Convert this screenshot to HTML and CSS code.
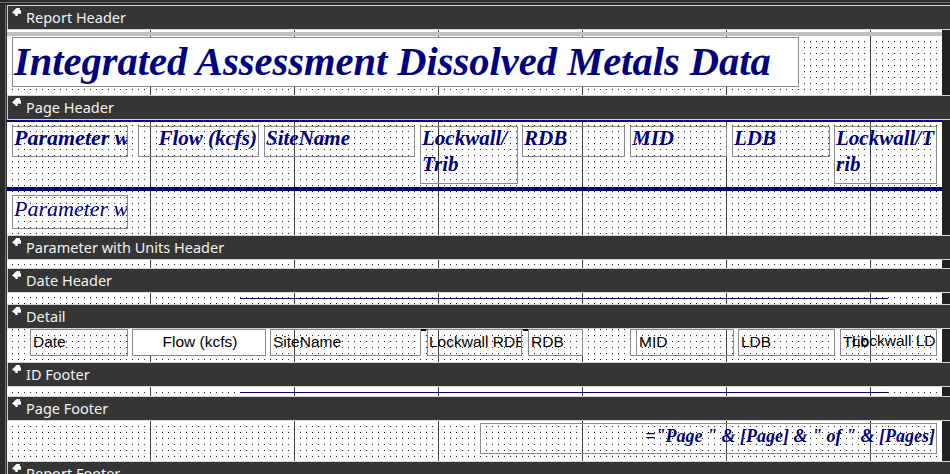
FILE: index.html
```html
<!doctype html>
<html>
  <head>
    <title>rptDissolvedMetals : Report</title>
    <link rel="stylesheet" href="styles.css">
  </head>
  <body>
    <div class="frame">
      <div class="sheet">

        <div class="band"><svg class="grip" viewBox="0 0 8 8"><path d="M0 4 L4 0 H7 V2 H8 V5 H5 V7 H3 V6 Z"/></svg><span>Report Header</span></div>
        <div class="sec sec-rh">
          <div class="rh-rule"></div>
          <div class="ctl title">Integrated Assessment Dissolved Metals Data</div>
        </div>

        <div class="band"><svg class="grip" viewBox="0 0 8 8"><path d="M0 4 L4 0 H7 V2 H8 V5 H5 V7 H3 V6 Z"/></svg><span>Page Header</span></div>
        <div class="sec sec-ph">
          <div class="ctl hd ph-param"><div>Parameter with Units</div></div>
          <div class="ctl hd ph-flow"><div>Flow (kcfs)</div></div>
          <div class="ctl hd ph-site"><div>SiteName</div></div>
          <div class="ctl hd wrap ph-lwr"><div>Lockwall/Trib</div></div>
          <div class="ctl hd ph-rdb"><div>RDB</div></div>
          <div class="ctl hd ph-mid"><div>MID</div></div>
          <div class="ctl hd ph-ldb"><div>LDB</div></div>
          <div class="ctl hd wrap ph-lwl"><div>Lockwall/Trib</div></div>
          <div class="ph-rule"></div>
          <div class="ctl ph-group">Parameter with Units</div>
        </div>

        <div class="band"><svg class="grip" viewBox="0 0 8 8"><path d="M0 4 L4 0 H7 V2 H8 V5 H5 V7 H3 V6 Z"/></svg><span>Parameter with Units Header</span></div>
        <div class="sec sec-pu"></div>

        <div class="band"><svg class="grip" viewBox="0 0 8 8"><path d="M0 4 L4 0 H7 V2 H8 V5 H5 V7 H3 V6 Z"/></svg><span>Date Header</span></div>
        <div class="sec sec-dh">
          <div class="thin-rule"></div>
        </div>

        <div class="band"><svg class="grip" viewBox="0 0 8 8"><path d="M0 4 L4 0 H7 V2 H8 V5 H5 V7 H3 V6 Z"/></svg><span>Detail</span></div>
        <div class="sec sec-dt">
          <div class="ctl fld d-date">Date</div>
          <div class="ctl fld d-flow">Flow (kcfs)</div>
          <div class="ctl fld d-site">SiteName</div>
          <span class="tick t1"></span>
          <div class="ctl fld d-lwr">Lockwall RDB</div>
          <span class="tick t2"></span>
          <div class="ctl fld d-rdb">RDB</div>
          <div class="ctl fld d-mida"></div>
          <div class="ctl fld d-mid">MID</div>
          <div class="ctl fld d-ldb">LDB</div>
          <div class="ctl fld d-trib">Trib</div>
          <div class="fld d-lwl">Lockwall LDB</div>
        </div>

        <div class="band"><svg class="grip" viewBox="0 0 8 8"><path d="M0 4 L4 0 H7 V2 H8 V5 H5 V7 H3 V6 Z"/></svg><span>ID Footer</span></div>
        <div class="sec sec-id">
          <div class="thin-rule"></div>
        </div>

        <div class="band"><svg class="grip" viewBox="0 0 8 8"><path d="M0 4 L4 0 H7 V2 H8 V5 H5 V7 H3 V6 Z"/></svg><span>Page Footer</span></div>
        <div class="sec sec-pf">
          <div class="ctl pages">="Page " &amp; [Page] &amp; " of " &amp; [Pages]</div>
        </div>

        <div class="band"><svg class="grip" viewBox="0 0 8 8"><path d="M0 4 L4 0 H7 V2 H8 V5 H5 V7 H3 V6 Z"/></svg><span>Report Footer</span></div>

      </div>
    </div>
  </body>
</html>
```

FILE: styles.css
```css
* {
  margin: 0;
  padding: 0;
  box-sizing: border-box;
}

html, body {
  background: #2a2a2a;
  height: 100%;
  overflow: hidden;
  font-family: "Noto Sans", sans-serif;
}

div.frame {
  margin-top: 2px;
  border-top: 1px solid #707070;
  padding: 2px 0 0 5px;
}

div.sheet {
  border-left: 1px solid #707070;
  padding-left: 1px;
}

/* section bars */
div.band {
  height: 25px;
  background: #353535;
  border: 1px solid #d4d4d4;
  border-right: none;
  display: flex;
  align-items: flex-start;
  padding-left: 4px;
  color: #f2f2f2;
  font-size: 14.5px;
  line-height: 23px;
}

svg.grip {
  width: 9px;
  height: 9px;
  margin-top: 2px;
  margin-right: 5px;
  fill: #ffffff;
  flex: none;
}

/* design surface: inch lines + grid dots */
div.sec {
  position: relative;
  background-color: #ffffff;
  background-image:
    linear-gradient(to right, #404040 1px, transparent 1px),
    conic-gradient(at 1px 1px, transparent 75%, #222 0);
  background-size: 144px 100%, 6px 6px;
  background-position: 143px 0, 5px 5px;
  border-right: 8px solid #222222;
}

div.sec-rh { height: 65px; }
div.sec-ph { height: 115px; box-shadow: inset 0 2px #000080; }
div.sec-pu { height: 8px; background-position: 143px 0, 5px 4px; }
div.sec-dh { height: 11px; background-position: 143px 0, 5px 4px; }
div.sec-dt { height: 33px; background-position: 143px 0, 5px 6px; }
div.sec-id { height: 9px; }
div.sec-pf { height: 40px; }

/* controls */
div.ctl {
  position: absolute;
  border: 1px solid #8a8a8a;
  overflow: hidden;
  white-space: nowrap;
}

div.rh-rule {
  position: absolute;
  left: 0;
  right: 0;
  top: 2px;
  height: 4px;
  background: #c0c0c0;
}

div.title {
  left: 5px;
  top: 7px;
  width: 787px;
  height: 50px;
  background: #ffffff;
  color: #000080;
  font: italic bold 40.5px/47px "Liberation Serif", serif;
  padding-left: 1px;
}

div.hd {
  top: 6px;
  height: 31px;
  color: #000080;
  font: italic bold 21px/26px "Liberation Serif", serif;
  padding: 0 1px;
}
div.hd > div {
  margin-top: -2px;
}
div.wrap {
  height: 58px;
  white-space: normal;
  word-break: break-all;
}

div.ph-param { left: 5px; width: 116px; font-size: 22px; }
div.ph-flow { left: 131px; width: 121px; text-align: right; }
div.ph-site { left: 257px; width: 151px; }
div.ph-lwr { left: 413px; width: 98px; }
div.ph-rdb { left: 515px; width: 103px; }
div.ph-mid { left: 623px; width: 97px; }
div.ph-ldb { left: 725px; width: 98px; }
div.ph-lwl { left: 827px; width: 103px; }

div.ph-rule {
  position: absolute;
  left: 0;
  right: 0;
  top: 67px;
  height: 4px;
  background: #000080;
}

div.ph-group {
  left: 5px;
  top: 75px;
  width: 116px;
  height: 34px;
  color: #000080;
  font: italic 22px/26px "Liberation Serif", serif;
  padding: 0 1px;
}

div.thin-rule {
  position: absolute;
  left: 233px;
  width: 648px;
  top: 5px;
  height: 1px;
  background: #000070;
}

div.fld {
  top: 0;
  height: 27px;
  color: #000000;
  font: 15.5px/23px "Liberation Sans", sans-serif;
  padding-left: 2px;
}

div.d-date { left: 23px; width: 98px; }
div.d-flow { left: 125px; width: 134px; background: #ffffff; text-align: center; }
div.d-site { left: 263px; width: 151px; }
div.d-lwr { left: 420px; width: 95px; padding-left: 1px; }
div.d-rdb { left: 521px; width: 55px; }
div.d-mida { left: 623px; width: 104px; }
div.d-mid { left: 629px; width: 98px; padding-left: 2px; }
div.d-ldb { left: 731px; width: 97px; }
div.d-trib { left: 833px; width: 97px; }
div.d-lwl {
  position: absolute;
  left: 843px;
  width: 86px;
  overflow: hidden;
  white-space: nowrap;
}

span.tick {
  position: absolute;
  top: 0;
  width: 5px;
  height: 2px;
  background: #000000;
}
span.t1 { left: 414px; }
span.t2 { left: 516px; }

div.pages {
  left: 473px;
  top: 2px;
  width: 457px;
  height: 31px;
  color: #000080;
  font: italic bold 18px/24px "Liberation Serif", serif;
  text-align: right;
  padding-right: 1px;
}
```
